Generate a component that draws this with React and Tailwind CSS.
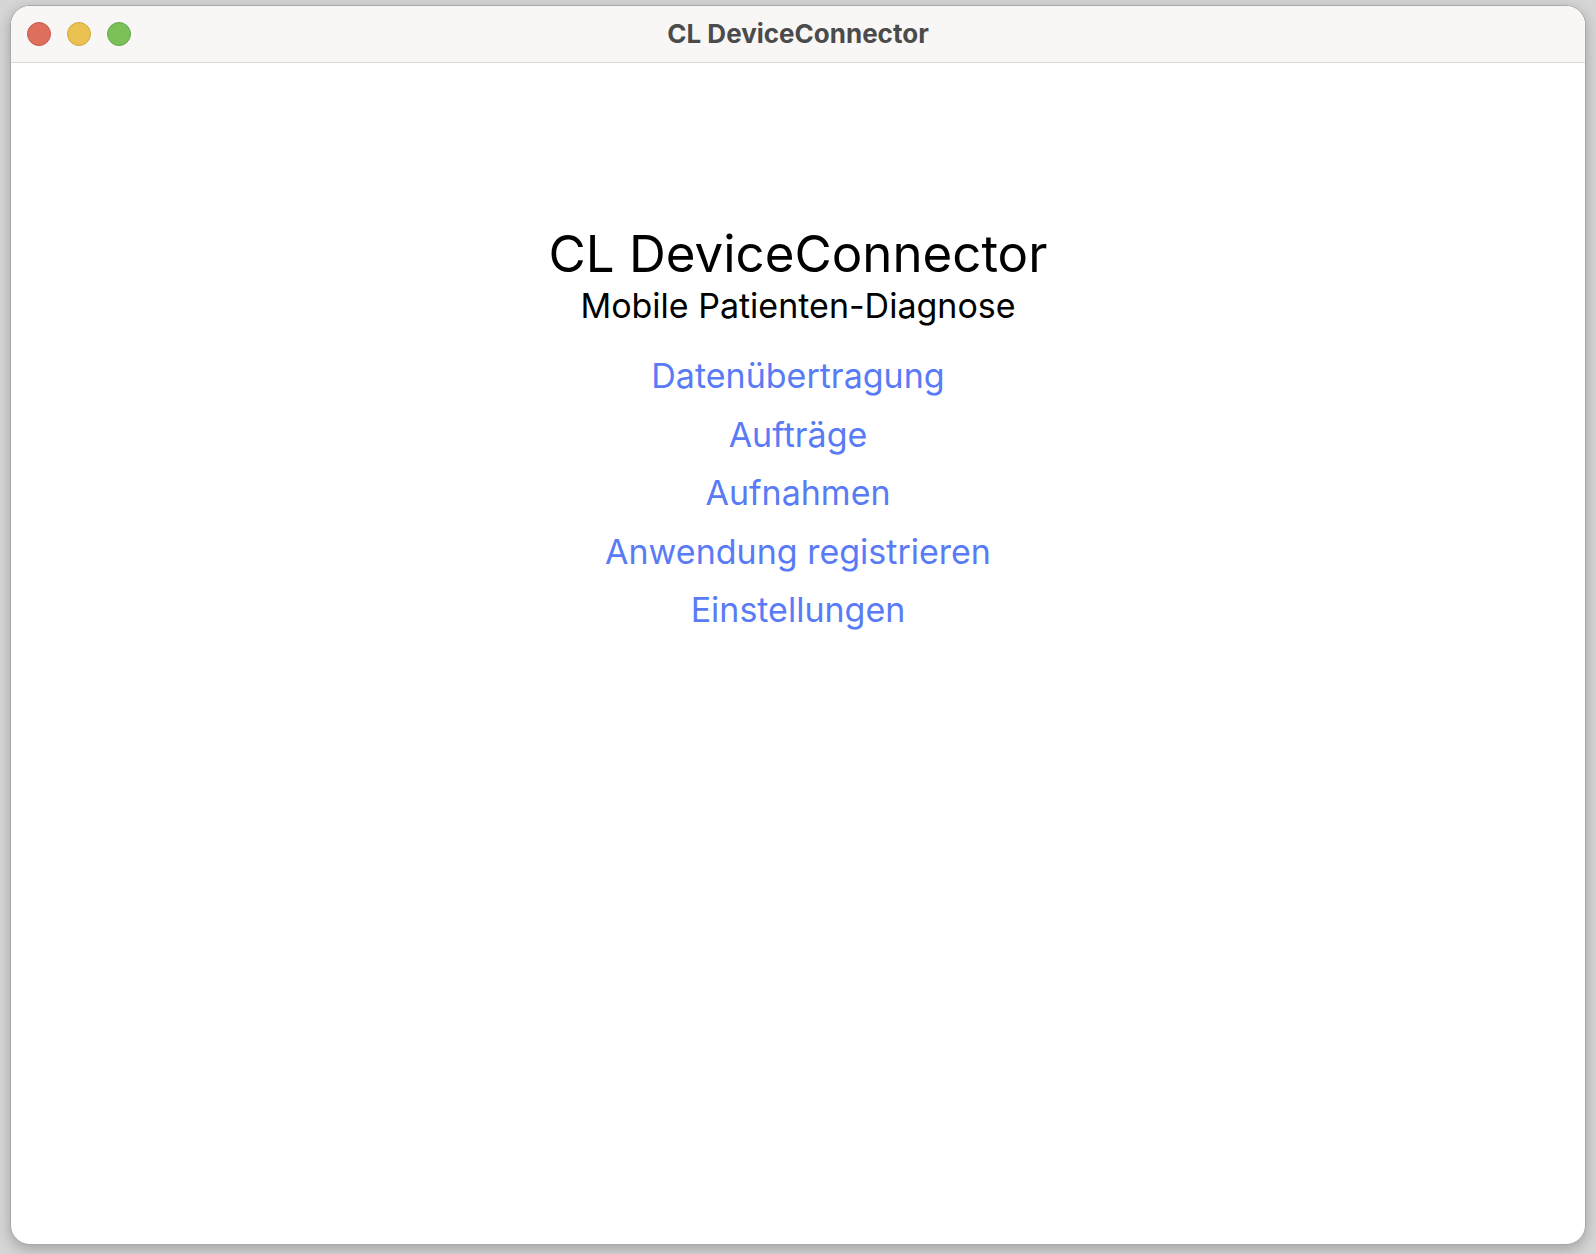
import React from 'react';

const LINKS = [
  'Datenübertragung',
  'Aufträge',
  'Aufnahmen',
  'Anwendung registrieren',
  'Einstellungen',
];

function TrafficLights() {
  return (
    <div className="flex items-center gap-4 pl-4">
      <span className="w-6 h-6 rounded-full bg-[#de6f5c] border border-[#c5584a]" />
      <span className="w-6 h-6 rounded-full bg-[#ebc251] border border-[#d1a73e]" />
      <span className="w-6 h-6 rounded-full bg-[#7bc158] border border-[#63a745]" />
    </div>
  );
}

export default function App() {
  return (
    <div
      className="w-full h-[1254px] bg-[#d6d6d6] pt-[5px] px-[10px] pb-[9px]"
      style={{ fontFamily: 'Inter, "Noto Sans", sans-serif' }}
    >
      <div className="h-full flex flex-col bg-white rounded-[20px] border border-[#a9a9a9] overflow-hidden shadow-[0_4px_14px_rgba(0,0,0,0.25)]">
        {/* Title bar */}
        <div className="h-[57px] flex-shrink-0 grid grid-cols-[1fr_auto_1fr] items-center bg-[#f8f7f6] border-b border-[#d9d9d9]">
          <TrafficLights />
          <p className="text-[26px] font-bold text-[#4b4b4b] leading-none">CL DeviceConnector</p>
          <div />
        </div>

        {/* Content */}
        <div className="flex-1 flex flex-col items-center pt-[159px]">
          <h1 className="text-[51px] leading-[64px] text-black font-normal">CL DeviceConnector</h1>
          <p className="text-[34px] leading-[40px] text-black">Mobile Patienten-Diagnose</p>
          <nav className="flex flex-col items-center mt-[21px]">
            {LINKS.map((label) => (
              <button
                key={label}
                className="text-[34px] leading-[58.5px] text-[#5a7bf6] bg-transparent"
              >
                {label}
              </button>
            ))}
          </nav>
        </div>
      </div>
    </div>
  );
}
